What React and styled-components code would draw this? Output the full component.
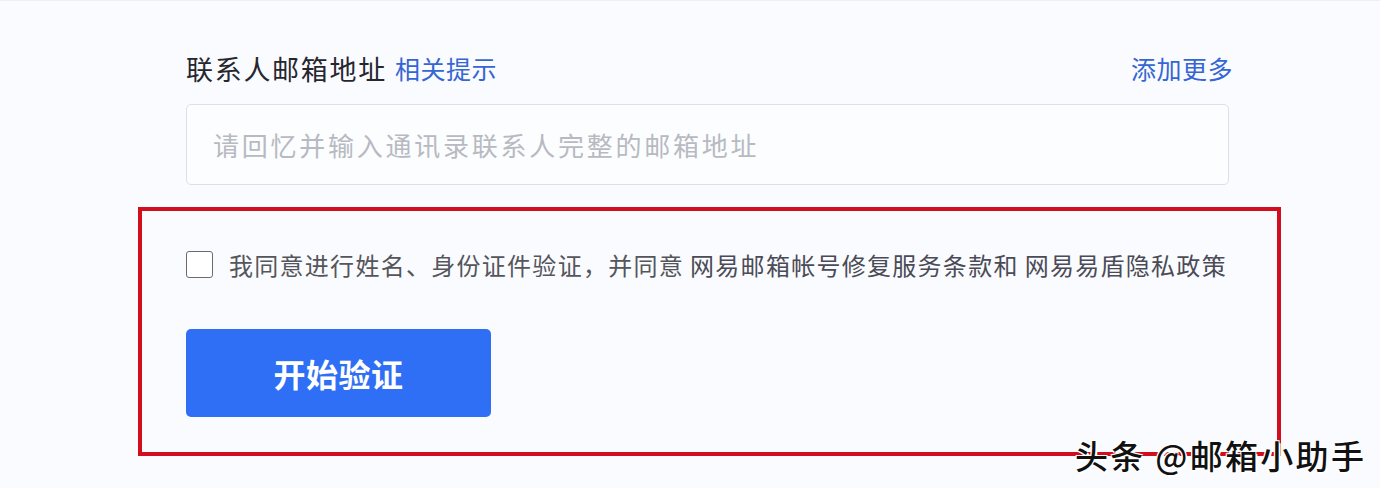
import React from 'react'
import styled, { createGlobalStyle } from 'styled-components'

const GlobalStyle = createGlobalStyle`
  html, body {
    margin: 0;
    padding: 0;
    background: #fafbfe;
  }
  body {
    font-family: "Noto Sans CJK SC", "Noto Sans", sans-serif;
  }
`

const Page = styled.div`
  position: relative;
  width: 1380px;
  height: 488px;
  box-sizing: border-box;
  border-top: 1px solid #eef0f4;
  background: #fafbfe;
  overflow: hidden;
`

const Form = styled.div`
  width: 1043px;
  margin-left: 186px;
  padding-top: 49px;
  display: flex;
  flex-direction: column;
`

const LabelRow = styled.div`
  display: flex;
  align-items: center;
  justify-content: space-between;
  height: 36px;
`

const Label = styled.div`
  display: flex;
  align-items: center;
  font-size: 27px;
  letter-spacing: 1.7px;
  color: #26262e;
`

const Link = styled.a`
  font-size: 25px;
  letter-spacing: 0.5px;
  color: #3566d4;
  text-decoration: none;
  margin-left: ${p => (p.$inline ? '8px' : '0')};
  margin-right: ${p => (p.$inline ? '0' : '-4px')};
  cursor: pointer;
`

const EmailInput = styled.input`
  margin-top: 18px;
  height: 81px;
  box-sizing: border-box;
  width: 100%;
  padding: 0 26px;
  border: 1px solid #dde1e7;
  border-radius: 5px;
  background: #fcfdff;
  font-family: inherit;
  font-size: 26px;
  letter-spacing: 2.75px;
  color: #333;
  outline: none;
  &::placeholder {
    color: #b7bac1;
  }
`

const Highlight = styled.div`
  margin: 22px -52px 0 -48px;
  border: 4px solid #d20d1d;
  padding: 40px 44px 35px;
  display: flex;
  flex-direction: column;
  align-items: flex-start;
`

const AgreeRow = styled.label`
  display: flex;
  align-items: center;
  gap: 16px;
  height: 27px;
  font-size: 24px;
  letter-spacing: 1.28px;
  color: #55565c;
  cursor: pointer;
  white-space: nowrap;
`

const Checkbox = styled.span`
  width: 27px;
  height: 27px;
  box-sizing: border-box;
  border: 1.5px solid #6a6b70;
  border-radius: 3px;
  background: #fff;
  flex: none;
`

const Term = styled.span`
  color: #4a4b56;
  margin-left: 6px;
`

const StartButton = styled.button`
  margin-top: 51px;
  width: 305px;
  height: 88px;
  border: none;
  border-radius: 5px;
  background: #2f6ff6;
  color: #fff;
  font-family: inherit;
  font-size: 32px;
  font-weight: 600;
  letter-spacing: 0.5px;
  cursor: pointer;
`

const Watermark = styled.div`
  position: absolute;
  left: 1075px;
  top: 430px;
  font-size: 33px;
  font-weight: 500;
  letter-spacing: 2.3px;
  color: #111;
  white-space: nowrap;
  text-shadow: 2px 2px 0 #fff, -1px -1px 0 #fff, 1px -1px 0 #fff, -1px 1px 0 #fff;
`

export default function App() {
  return (
    <Page>
      <GlobalStyle />
      <Form>
        <LabelRow>
          <Label>
            联系人邮箱地址
            <Link $inline>相关提示</Link>
          </Label>
          <Link>添加更多</Link>
        </LabelRow>
        <EmailInput placeholder="请回忆并输入通讯录联系人完整的邮箱地址" />
        <Highlight>
          <AgreeRow>
            <Checkbox />
            <span>
              我同意进行姓名、身份证件验证，并同意
              <Term>网易邮箱帐号修复服务条款和</Term>
              <Term>网易易盾隐私政策</Term>
            </span>
          </AgreeRow>
          <StartButton>开始验证</StartButton>
        </Highlight>
      </Form>
      <Watermark>头条 @邮箱小助手</Watermark>
    </Page>
  )
}
